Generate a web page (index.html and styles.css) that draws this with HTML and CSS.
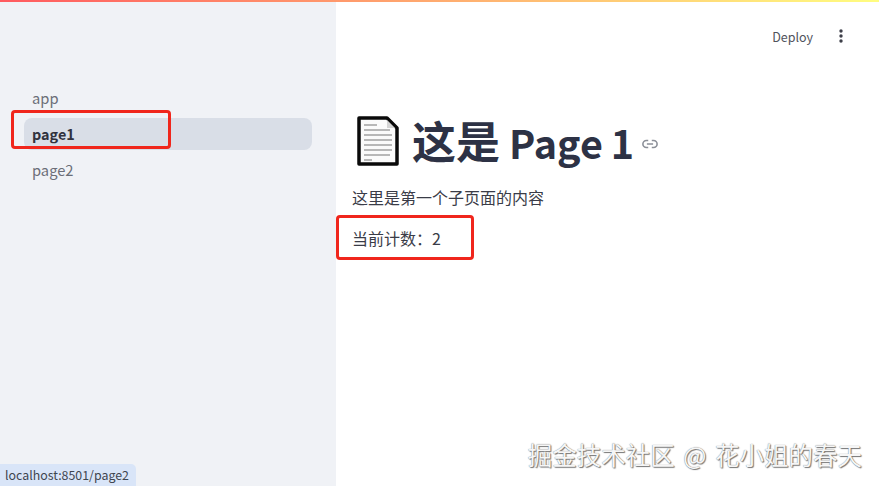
FILE: index.html
```html
<!DOCTYPE html>
<html lang="zh-CN">
<head>
    <meta charset="UTF-8">
    <title>page1</title>
    <link rel="stylesheet" href="styles.css">
</head>
<body>
    <div class="top-bar"></div>
    <div class="app">
        <aside class="sidebar">
            <nav class="nav">
                <a class="nav-item">app</a>
                <a class="nav-item active">page1</a>
                <a class="nav-item">page2</a>
            </nav>
        </aside>
        <main class="main">
            <header class="toolbar">
                <span class="deploy">Deploy</span>
                <svg class="kebab" width="4" height="14" viewBox="0 0 4 14">
                    <circle cx="2" cy="2" r="1.7"/>
                    <circle cx="2" cy="7" r="1.7"/>
                    <circle cx="2" cy="12" r="1.7"/>
                </svg>
            </header>
            <section class="content">
                <div class="title-row">
                    <svg class="doc-icon" width="42" height="50" viewBox="0 0 42 50">
                        <path d="M2 2H30L40 12V48H2Z" fill="#fbfbfb" stroke="#0a0a0a" stroke-width="3.500" stroke-linejoin="round"/>
                        <path d="M30 4V12H38Z" fill="#d4d4d4"/>
                        <path d="M7 9H20M7 14H33M7 19H35M7 24H35M7 29H35M7 34H35M7 39H33M7 44H15" stroke="#a3a3a3" stroke-width="1.500" fill="none"/>
                    </svg>
                    <h1 class="title">这是 <span class="title-latin">Page 1</span></h1>
                    <svg class="link-icon" width="16" height="10" viewBox="0 0 18 11" fill="none" stroke="#8b8f98" stroke-width="1.800">
                        <path d="M7 1.500H5a4 4 0 0 0 0 8h2M11 1.500h2a4 4 0 0 1 0 8h-2M5.500 5.500h7"/>
                    </svg>
                </div>
                <p class="text">这里是第一个子页面的内容</p>
                <p class="text">当前计数：2</p>
            </section>
        </main>
    </div>

    <!-- annotations and overlays -->
    <div class="mark mark-nav"></div>
    <div class="mark mark-count"></div>
    <div class="status-tip">localhost:8501/page2</div>
    <div class="watermark">掘金技术社区 @ 花小姐的春天</div>
</body>
</html>
```

FILE: styles.css
```css
* {
    box-sizing: border-box;
}
html, body {
    height: 100%;
}
body {
    margin: 0;
    overflow: hidden;
    font-family: "Noto Sans CJK SC", "Noto Sans", sans-serif;
    color: #3a3c47;
    background-color: #fff;
}
.top-bar {
    position: absolute;
    top: 0;
    left: 0;
    width: 100%;
    height: 2px;
    background: linear-gradient(90deg, #ff5a5f, #fffd80);
}
.app {
    display: flex;
    height: 100%;
}
.sidebar {
    width: 336px;
    flex-shrink: 0;
    padding: 82px 24px 0;
    background-color: #f0f2f6;
}
.nav {
    display: flex;
    flex-direction: column;
    gap: 4px;
}
.nav-item {
    height: 32px;
    padding-left: 8px;
    border-radius: 8px;
    font-size: 14.700px;
    line-height: 32px;
    color: #6b6e78;
}
.nav-item.active {
    font-size: 14.400px;
    font-weight: 700;
    color: #31333f;
    background-color: #d9dee7;
}
.main {
    flex: 1;
    padding: 0 16px;
}
.toolbar {
    display: flex;
    justify-content: flex-end;
    align-items: center;
    gap: 26px;
    height: 72px;
    padding-right: 20px;
}
.deploy {
    font-size: 12.500px;
    color: #50525c;
}
.kebab {
    fill: #3d3f49;
}
.content {
    padding-top: 41px;
}
.title-row {
    display: flex;
    align-items: center;
    height: 56px;
    padding-left: 5px;
}
.doc-icon {
    flex-shrink: 0;
}
.title {
    margin: 0 0 0 13px;
    font-size: 44px;
    font-weight: 700;
    line-height: 56px;
    color: #2d3245;
    word-spacing: -1px;
}
.title-latin {
    font-size: 39.500px;
}
.link-icon {
    margin: 5px 0 0 8px;
}
.text {
    margin: 0 0 16px;
    font-size: 16px;
    line-height: 25px;
}
.title-row + .text {
    margin-top: 16px;
}
.mark {
    position: absolute;
    border: 3px solid #f0261c;
    border-radius: 4px;
}
.mark-nav {
    left: 11px;
    top: 110px;
    width: 160px;
    height: 39px;
}
.mark-count {
    left: 336px;
    top: 215px;
    width: 138px;
    height: 45px;
}
.status-tip {
    position: absolute;
    left: 0;
    bottom: 0;
    width: 136px;
    height: 22px;
    padding-left: 5px;
    border-radius: 0 5px 0 0;
    font-size: 12.400px;
    line-height: 23px;
    color: #3f4650;
    background-color: #d9e5f8;
}
.watermark {
    position: absolute;
    right: 17px;
    top: 440px;
    font-size: 24.500px;
    line-height: 30px;
    word-spacing: 3px;
    white-space: nowrap;
    color: #f6f6f6;
    text-shadow: 0 0 1px #666, 1px 1px 1px #777;
}
```
